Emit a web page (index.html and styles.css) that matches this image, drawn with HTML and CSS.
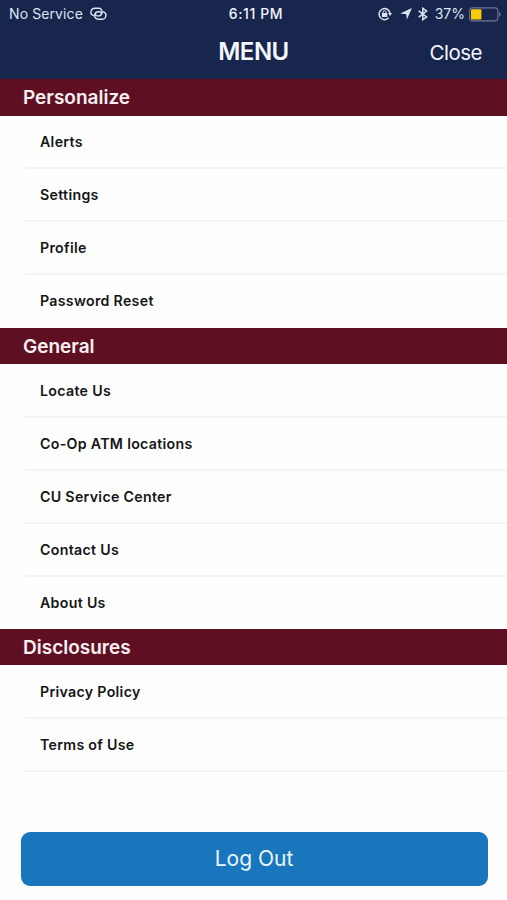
FILE: index.html
```html
<!DOCTYPE html>
<html lang="en">
<head>
<meta charset="utf-8">
<title>Menu</title>
<link rel="stylesheet" href="styles.css">
</head>
<body>
<div class="screen">
  <header class="header">
    <div class="status">
      <div class="status-left">
        <span class="carrier">No Service</span>
        <svg class="icon-link" width="17" height="14" viewBox="0 0 17 14" fill="none" stroke="currentColor" stroke-width="1.4" stroke-linecap="round">
          <path d="M3.4 8.6C1.4 8 .7 6.4.9 4.9C1.2 2.7 2.9 1.2 5 1.2H8.4C11 1.2 12.3 3.2 12.1 5.1C11.9 7.4 10.4 8.9 8.3 8.9H7.3C5.6 8.9 5 7.7 5.6 6.7"/>
          <path d="M13.3 4.8C15.3 5.4 16.1 7 15.9 8.5C15.6 10.7 13.9 12.3 11.8 12.3H8.4C5.8 12.3 4.5 10.3 4.7 8.4C4.9 6.1 6.4 4.7 8.5 4.7H9.5C11.2 4.7 11.8 5.9 11.2 6.9"/>
        </svg>
      </div>
      <span class="time">6:11 PM</span>
      <div class="status-right">
        <svg width="14" height="14" viewBox="0 0 14 14" fill="none" stroke="currentColor">
          <path d="M10.7 10.8A5.5 5.5 0 1 1 12 6.1" stroke-width="1.5"/>
          <path d="M9.9 6H14L12 8.9Z" fill="currentColor" stroke="none"/>
          <rect x="3.9" y="6" width="5.4" height="4" rx=".5" fill="currentColor" stroke="none"/>
          <path d="M5.1 6.5V5.2A1.5 1.5 0 0 1 8.1 5.2V6.5"/>
        </svg>
        <svg class="icon-location" width="12" height="12" viewBox="0 0 12 12"><path d="M11.9 0L6.8 11.8L6.3 6.3L.2 5.6Z" fill="currentColor"/></svg>
        <svg class="icon-bluetooth" width="10" height="14" viewBox="0 0 10 14" fill="none" stroke="currentColor" stroke-width="1.5"><path d="M.7 3.8L8.6 10L4.8 12.7V1.3L8.6 4L.7 10.2"/></svg>
        <span class="percent">37%</span>
        <svg class="icon-battery" width="32" height="15" viewBox="0 0 32 15">
          <rect x=".6" y=".9" width="28.2" height="13" rx="2.8" fill="none" stroke="#6d7590" stroke-width="1.1"/>
          <rect x="2" y="2.3" width="10.4" height="10.2" rx="1" fill="#fdcb05"/>
          <path d="M30 5Q31.6 5.5 31.6 7.4T30 9.8Z" fill="#6d7590"/>
        </svg>
      </div>
    </div>
    <div class="nav">
      <h1 class="title">MENU</h1>
      <span class="close">Close</span>
    </div>
  </header>
  <main>
    <h2 class="section section-first">Personalize</h2>
    <ul class="list list-first">
      <li>Alerts</li>
      <li>Settings</li>
      <li>Profile</li>
      <li>Password Reset</li>
    </ul>
    <h2 class="section">General</h2>
    <ul class="list list-middle">
      <li>Locate Us</li>
      <li>Co-Op ATM locations</li>
      <li>CU Service Center</li>
      <li>Contact Us</li>
      <li>About Us</li>
    </ul>
    <h2 class="section">Disclosures</h2>
    <ul class="list">
      <li>Privacy Policy</li>
      <li>Terms of Use</li>
    </ul>
  </main>
  <button class="logout" type="button">Log Out</button>
</div>
</body>
</html>
```
FILE: styles.css
```css
* { box-sizing: border-box; }
body {
  margin: 0;
  background: #fefefe;
  color: #151515;
  font-family: Inter, "Liberation Sans", sans-serif;
}
.screen {
  display: flex;
  flex-direction: column;
  height: 900px;
  overflow: hidden;
}
.header {
  height: 79px;
  flex: none;
  background: #18264e;
  color: #f3f6fc;
}
.status {
  display: grid;
  grid-template-columns: 1fr auto 1fr;
  align-items: center;
  height: 28px;
  padding: 0 6px 0 9px;
  font-size: 14px;
  line-height: 28px;
  color: #dce3f2;
}
.status-left, .status-right { display: flex; align-items: center; }
.status-right { justify-content: flex-end; }
.carrier { letter-spacing: 0.1px; }
.icon-link { margin-left: 7.5px; }
.time {
  padding-left: 2px;
  font-weight: 500;
  font-size: 14px;
  letter-spacing: 0.6px;
  color: #f3f6fc;
}
.icon-location { margin-left: 8px; }
.icon-bluetooth { margin-left: 6px; }
.percent { margin-left: 7px; }
.icon-battery { margin-left: 4px; }
.nav {
  display: grid;
  grid-template-columns: 1fr auto 1fr;
  align-items: center;
  height: 47px;
  padding: 0 25px;
}
.title {
  grid-column: 2;
  margin: 0;
  font-size: 24px;
  font-weight: 600;
  letter-spacing: -0.5px;
}
.close {
  justify-self: end;
  padding-top: 2px;
  font-size: 20.5px;
  letter-spacing: -0.5px;
}
.section {
  height: 36px;
  margin: 0;
  padding-left: 23px;
  background: #5e1022;
  color: #faeff1;
  font-size: 19px;
  font-weight: 600;
  line-height: 37px;
}
.section-first { height: 37px; line-height: 38px; }
.list { margin: 0; padding: 1px 0 0 25px; list-style: none; }
.list-first { padding-top: 0; }
.list li {
  height: 53px;
  padding-left: 15px;
  border-bottom: 2px solid #f4f4f4;
  font-size: 14.2px;
  font-weight: 600;
  line-height: 52px;
  letter-spacing: 0.3px;
}
.list-first li:last-child, .list-middle li:last-child { border-bottom: 0; }
.list-middle li:last-child { height: 52px; }
.logout {
  flex: none;
  width: 467px;
  height: 54px;
  margin: auto 0 14.5px 20.5px;
  padding: 0;
  border: 0;
  border-radius: 9px;
  background: #1976bc;
  color: #e9f6ff;
  font: 400 21px/54px Inter, "Liberation Sans", sans-serif;
}
```
